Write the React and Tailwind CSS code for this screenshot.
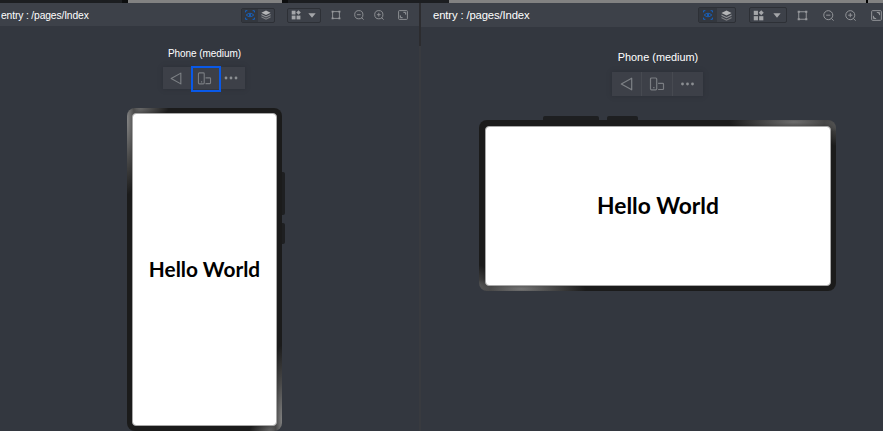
import React from "react";

function EyeIcon({ className }) {
  return (
    <svg viewBox="0 0 10 10" className={className} fill="none" stroke="#1169d8" strokeWidth=".9">
      <path d="M.6 2.4V.7H2.4M7.6.7H9.4V2.4M9.4 7.6V9.3H7.6M2.4 9.3H.6V7.6" />
      <path d="M1.2 5Q5 1.5 8.8 5Q5 8.5 1.2 5Z" strokeWidth=".8" />
      <circle cx="5" cy="5" r="1" fill="#1169d8" stroke="none" />
    </svg>
  );
}

function LayersIcon({ className }) {
  return (
    <svg viewBox="0 0 10 10" className={className} fill="#b4b5b7">
      <path d="M5 .5L9.6 2.8L5 5.1L.4 2.8Z" />
      <path d="M.4 4L5 6.3L9.6 4V5.3L5 7.6L.4 5.3Z" fill="#8f9195" />
      <path d="M.4 6.3L5 8.6L9.6 6.3V7.4L5 9.8L.4 7.4Z" fill="#7d7f83" />
    </svg>
  );
}

function GridIcon({ className }) {
  return (
    <svg viewBox="0 0 10 10" className={className} fill="#a4a6a9">
      <rect x=".7" y=".7" width="3.8" height="3.8" />
      <path d="M7.5.2L9.8 2.5L7.5 4.8L5.2 2.5Z" />
      <rect x=".7" y="5.6" width="3.8" height="3.8" />
      <rect x="5.6" y="5.6" width="3.8" height="3.8" />
    </svg>
  );
}

function CaretIcon({ className }) {
  return (
    <svg viewBox="0 0 8 5" className={className} fill="#a4a6a9">
      <path d="M.3.2H7.7L4 4.8Z" />
    </svg>
  );
}

function FrameIcon({ className }) {
  return (
    <svg viewBox="0 0 10 10" className={className} fill="none" stroke="#96989c">
      <path d="M1.6 1.6H8.4V8.4H1.6Z" strokeWidth=".9" />
      <path d="M.6 1.6H2.6M7.4 1.6H9.4M.6 8.4H2.6M7.4 8.4H9.4" strokeWidth="1.9" />
    </svg>
  );
}

function ZoomIcon({ className, plus }) {
  return (
    <svg viewBox="0 0 10 10" className={className} fill="none" stroke="#94969a" strokeWidth=".9">
      <circle cx="4.8" cy="4.7" r="4.1" />
      <path d="M7.6 7.6L9.6 9.7M2.9 4.7H6.7" />
      {plus && <path d="M4.8 2.8V6.6" />}
    </svg>
  );
}

function FitIcon({ className }) {
  return (
    <svg viewBox="0 0 10 10" className={className} fill="none" stroke="#94969a" strokeWidth=".9">
      <rect x=".6" y=".6" width="8.8" height="8.8" rx=".8" />
      <path d="M5.3 2.3H7.7V4.7M2.3 5.3V7.7H4.7" />
      <path d="M6.3 2.3L7.7 3.7M2.3 6.3L3.7 7.7" />
    </svg>
  );
}

function BackIcon({ className }) {
  return (
    <svg viewBox="0 0 12 14" className={className} fill="none" stroke="#7d8085" strokeWidth="1.2" strokeLinejoin="round">
      <path d="M11.2 1.2V12.8L.8 7Z" />
    </svg>
  );
}

function RotateIcon({ className }) {
  return (
    <svg viewBox="0 0 15 14" className={className} fill="none" stroke="#7a7d82" strokeWidth="1.2">
      <rect x="1" y="1" width="6.2" height="11.8" rx="1" />
      <path d="M8.6 6.3H13.2Q14 6.3 14 7.1V11.7Q14 12.5 13.2 12.5H8.6M3.7 10.6H5" />
    </svg>
  );
}

function MoreIcon({ className }) {
  return (
    <svg viewBox="0 0 14 4" className={className} fill="#8b8e92">
      <circle cx="2" cy="2" r="1.4" />
      <circle cx="7" cy="2" r="1.4" />
      <circle cx="12" cy="2" r="1.4" />
    </svg>
  );
}

function LeftPane() {
  return (
    <section className="flex w-[419px] shrink-0 flex-col">
      <header className="flex h-[23px] items-center bg-[#3d4149] pt-px">
        <span className="w-[241px] pt-px pl-px text-[10.3px] tracking-[-0.14px] whitespace-nowrap text-white">entry : /pages/Index</span>
        <div className="flex h-[15px] w-[34px] overflow-hidden rounded-[2px] border border-[#2d3036]">
          <span className="flex w-4 items-center justify-center bg-[#33373e]"><EyeIcon className="size-[10px]" /></span>
          <span className="flex flex-1 items-center justify-center"><LayersIcon className="size-[10px]" /></span>
        </div>
        <div className="ml-3 flex h-[15px] w-[34px] items-center rounded-[2px] border border-[#2d3036] pl-[3px]">
          <GridIcon className="size-[10px]" />
          <CaretIcon className="ml-[7px] h-[5px] w-[8px]" />
        </div>
        <FrameIcon className="ml-[10px] size-[10px]" />
        <ZoomIcon className="ml-[13px] size-[10px]" />
        <ZoomIcon plus className="ml-[10px] size-[10px]" />
        <FitIcon className="ml-[14px] size-[10px]" />
      </header>
      <div className="flex flex-1 flex-col pl-[127px]">
        <div className="mt-[21px] w-[155px] text-center text-[10px] leading-[14px] tracking-[-0.05px] whitespace-nowrap text-white">Phone (medium)</div>
        <div className="mt-[5px] ml-[36px] flex h-[26px] items-start">
          <span className="mt-px flex h-[22px] w-[28px] items-center justify-center bg-[#3d4048] pr-[2px] shadow-[0_0_4px_#2b2f36]"><BackIcon className="h-[13px] w-[12px]" /></span>
          <span className="z-10 flex h-[26px] w-[30px] border-2 border-[#0959e8] bg-[#33373f]">
            <span className="flex h-[21px] w-full items-center bg-[#3d4048] pl-[4px]"><RotateIcon className="h-[13px] w-[15px]" /></span>
          </span>
          <span className="mt-px flex h-[22px] w-[24px] items-center bg-[#3d4048] pl-[3px] shadow-[0_0_4px_#2b2f36]"><MoreIcon className="h-[4px] w-[14px]" /></span>
        </div>
        <div className="mt-[16px] flex">
          <div className="h-[323px] w-[155px] rounded-[8px] bg-[#1b1b1b] bg-[radial-gradient(14px_75px_at_0px_12px,#858585,#4b4b4b_50%,transparent),radial-gradient(35px_12px_at_7px_0px,#777,transparent),radial-gradient(13px_75px_at_155px_312px,#808080,#484848_50%,transparent),radial-gradient(30px_12px_at_152px_323px,#808080,transparent)] p-[5px]">
            <div className="flex h-full items-center justify-center rounded-[4px] border border-[#a8a8a8] bg-white pb-[2px] font-[Lato,sans-serif] text-[20.8px] font-bold whitespace-nowrap text-black">Hello World</div>
          </div>
          <div className="flex flex-col gap-[8px] pt-[64px]">
            <div className="h-[43px] w-[3px] rounded-r-[2px] bg-[#1e1f21]" />
            <div className="h-[21px] w-[3px] rounded-r-[2px] bg-[#1e1f21]" />
          </div>
        </div>
      </div>
    </section>
  );
}

function RightPane() {
  return (
    <section className="flex flex-1 flex-col overflow-hidden">
      <header className="flex h-[24px] shrink-0 items-center bg-[#3d4149]">
        <span className="w-[277px] shrink-0 pl-[12px] text-[11.3px] tracking-[-0.14px] whitespace-nowrap text-white">entry : /pages/Index</span>
        <div className="flex h-[16px] w-[38px] shrink-0 overflow-hidden rounded-[2px] border border-[#2d3036]">
          <span className="flex w-[18px] items-center justify-center bg-[#33373e]"><EyeIcon className="size-[10px]" /></span>
          <span className="flex flex-1 items-center justify-center"><LayersIcon className="size-[11px]" /></span>
        </div>
        <div className="ml-[13px] flex h-[16px] w-[38px] shrink-0 items-center rounded-[2px] border border-[#2d3036] pl-[3px]">
          <GridIcon className="size-[11px]" />
          <CaretIcon className="ml-[9px] h-[5px] w-[8px]" />
        </div>
        <FrameIcon className="ml-[10px] size-[11px] shrink-0" />
        <ZoomIcon className="ml-[15px] size-[11px] shrink-0" />
        <ZoomIcon plus className="ml-[11px] size-[11px] shrink-0" />
        <FitIcon className="ml-[15px] size-[11px] shrink-0" />
      </header>
      <div className="flex flex-1 flex-col pl-[58px]">
        <div className="mt-[22px] w-[358px] text-center text-[10.9px] leading-[16px] whitespace-nowrap text-white">Phone (medium)</div>
        <div className="mt-[7px] ml-[133px] flex h-[24px] w-[91px] divide-x divide-[#474a51] bg-[#3d4048] shadow-[0_0_4px_#2b2f36]">
          <span className="flex flex-1 items-center justify-center"><BackIcon className="h-[14px] w-[13px]" /></span>
          <span className="flex flex-1 items-center justify-center"><RotateIcon className="h-[14px] w-[16px]" /></span>
          <span className="flex flex-1 items-center justify-center pr-px"><MoreIcon className="h-[4px] w-[15px]" /></span>
        </div>
        <div className="mt-[20px] flex gap-[8px] pl-[64px]">
          <div className="h-[4px] w-[56px] rounded-t-[2px] bg-[#1e1f21]" />
          <div className="h-[4px] w-[31px] rounded-t-[2px] bg-[#1e1f21]" />
        </div>
        <div className="h-[171px] w-[357px] rounded-[8px] bg-[#1b1b1b] bg-[radial-gradient(65px_12px_at_315px_2px,#6d6d6d,transparent),radial-gradient(12px_20px_at_357px_6px,#484848,transparent),radial-gradient(65px_12px_at_42px_169px,#747474,transparent),radial-gradient(12px_20px_at_0px_165px,#484848,transparent)] pt-[6px] pr-[5px] pb-[5px] pl-[6px]">
          <div className="flex h-full items-center justify-center rounded-[4px] border border-[#a8a8a8] bg-white pb-px font-[Lato,sans-serif] text-[22.8px] font-bold whitespace-nowrap text-black">Hello World</div>
        </div>
      </div>
    </section>
  );
}

export default function App() {
  return (
    <main className="flex h-[431px] w-[883px] flex-col overflow-hidden bg-[#33373f] font-['Liberation_Sans',Arial,sans-serif]">
      <div className="flex h-[3px] shrink-0 bg-[#1c1e21]">
        <div className="w-[122px]" />
        <div className="w-[6px] bg-[#0d0e0f]" />
        <div className="w-[154px] bg-[#828282]" />
        <div className="w-[6px] bg-[#0d0e0f]" />
        <div className="w-[161px]" />
        <div className="w-[417px] bg-[#828282]" />
        <div className="w-[2px] bg-black" />
        <div className="flex-1 bg-[#828282]" />
      </div>
      <div className="flex flex-1">
        <LeftPane />
        <div className="flex w-[2px] shrink-0 flex-col bg-[#383a3f]">
          <div className="h-[43px] bg-[#2c2c2f]" />
        </div>
        <RightPane />
      </div>
    </main>
  );
}
